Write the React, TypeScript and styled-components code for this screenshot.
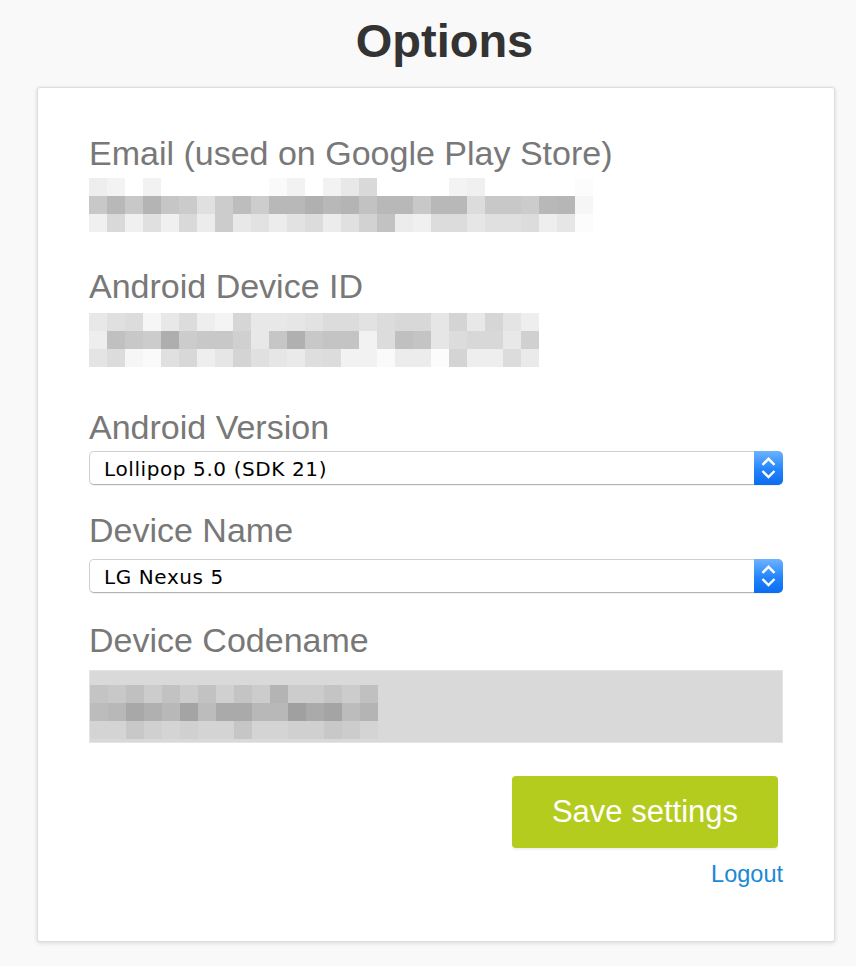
import React from "react";
import styled, { createGlobalStyle } from "styled-components";

const GlobalStyle = createGlobalStyle`
  html, body {
    margin: 0;
    padding: 0;
    background: #f9f9f9;
  }
  body {
    font-family: "Liberation Sans", Arial, sans-serif;
  }
  * { box-sizing: border-box; }
`;

const Page = styled.div`
  padding: 17px 0 20px 37px;
`;

const Title = styled.h1`
  margin: 0 0 23px 0;
  width: 798px;
  padding-left: 17px;
  text-align: center;
  font-family: "Liberation Sans", Arial, sans-serif;
  font-weight: bold;
  font-size: 47px;
  line-height: 47px;
  color: #333333;
`;

const Card = styled.div`
  width: 798px;
  background: #ffffff;
  border: 1px solid #dedede;
  border-radius: 3px;
  box-shadow: 0 1px 4px rgba(0, 0, 0, 0.14);
  padding: 45px 51px 53px 51px;
  display: flex;
  flex-direction: column;
`;

const Label = styled.div<{ $top: number }>`
  margin-top: ${(p) => p.$top}px;
  font-family: "Liberation Sans", Arial, sans-serif;
  font-size: 34px;
  line-height: 40px;
  color: #787878;
  white-space: nowrap;
`;

const Control = styled.div<{ $gap: number }>`
  margin-top: ${(p) => p.$gap}px;
  display: flex;
`;

const SelectBox = styled.div`
  position: relative;
  width: 100%;
  height: 34px;
  display: flex;
  align-items: flex-start;
  background: #ffffff;
  border: 1px solid #d0d0d0;
  border-bottom-color: #b3b3b3;
  border-radius: 5px;
  box-shadow: 0 1px 1px rgba(0, 0, 0, 0.06);
`;

const SelectText = styled.span`
  flex: 1;
  padding: 7px 0 0 14px;
  font-family: "DejaVu Sans", "Liberation Sans", sans-serif;
  font-size: 20px;
  line-height: 20px;
  letter-spacing: 0.6px;
  color: #000000;
`;

const Stepper = styled.span`
  width: 29px;
  height: 34px;
  margin: -1px -1px 0 0;
  border-radius: 0 5px 5px 0;
  background: linear-gradient(#6cb3ff, #2384fb 55%, #0a6cf0);
  display: flex;
`;

const Disabled = styled.div`
  width: 100%;
  height: 73px;
  background: #d9d9d9;
  border: 1px solid #e4e4e4;
  padding-top: 14px;
  display: flex;
`;

const Actions = styled.div`
  margin-top: 33px;
  display: flex;
  flex-direction: column;
  align-items: flex-end;
`;

const SaveButton = styled.button`
  width: 266px;
  height: 72px;
  margin-right: 5px;
  border: none;
  border-radius: 4px;
  background: #b4cc1e;
  box-shadow: 0 2px 2px rgba(0, 0, 0, 0.06);
  color: #ffffff;
  font-family: "Liberation Sans", Arial, sans-serif;
  font-size: 31px;
  line-height: 72px;
  padding: 0;
  cursor: pointer;
`;

const LogoutLink = styled.a`
  margin-top: 12px;
  font-family: "Liberation Sans", Arial, sans-serif;
  font-size: 23.5px;
  line-height: 28px;
  color: #1a88d3;
  text-decoration: none;
`;

const hex = (v: number) => {
  const h = v.toString(16).padStart(2, "0");
  return `#${h}${h}${h}`;
};

const Pixelated: React.FC<{ rows: number[][] }> = ({ rows }) => {
  const cell = 18;
  const cols = rows[0].length;
  return (
    <svg width={cols * cell} height={rows.length * cell} style={{ display: "block" }}>
      {rows.map((r, y) =>
        r.map((v, x) => (
          <rect key={`${x}-${y}`} x={x * cell} y={y * cell} width={cell} height={cell} fill={hex(v)} />
        ))
      )}
    </svg>
  );
};

const emailRows = [
  [0xee, 0xf3, 0xff, 0xf2, 0xff, 0xff, 0xff, 0xff, 0xff, 0xff, 0xfa, 0xf2, 0xff, 0xf2, 0xe8, 0xd9, 0xff, 0xff, 0xff, 0xff, 0xf3, 0xf0, 0xff, 0xff, 0xff, 0xff, 0xff, 0xfc],
  [0xc8, 0xb8, 0xc8, 0xb4, 0xc6, 0xcb, 0xe0, 0xcc, 0xbd, 0xcd, 0xb8, 0xb8, 0xb0, 0xb8, 0xb4, 0xc2, 0xb8, 0xb8, 0xc8, 0xb8, 0xb8, 0xdc, 0xc8, 0xc8, 0xcc, 0xb8, 0xb6, 0xf6],
  [0xf0, 0xd9, 0xf0, 0xe0, 0xf0, 0xd9, 0xec, 0xcc, 0xe8, 0xe2, 0xec, 0xe2, 0xdc, 0xec, 0xe0, 0xd2, 0xc2, 0xec, 0xf0, 0xdc, 0xdc, 0xe6, 0xe0, 0xe0, 0xdc, 0xee, 0xe6, 0xfc],
];

const deviceRows = [
  [0xe8, 0xe0, 0xdc, 0xf6, 0xe8, 0xdc, 0xee, 0xf4, 0xd6, 0xe8, 0xe8, 0xe6, 0xe2, 0xdc, 0xdc, 0xe2, 0xdc, 0xd8, 0xd8, 0xe6, 0xd4, 0xe8, 0xd6, 0xe4, 0xee],
  [0xee, 0xc0, 0xc8, 0xcc, 0xae, 0xcc, 0xc8, 0xc8, 0xd0, 0xe8, 0xc6, 0xb0, 0xc8, 0xc4, 0xc4, 0xf2, 0xdc, 0xc0, 0xc4, 0xe6, 0xdc, 0xd8, 0xd8, 0xe8, 0xd0],
  [0xe4, 0xdc, 0xf6, 0xfa, 0xe0, 0xd8, 0xee, 0xe6, 0xd4, 0xe0, 0xe6, 0xea, 0xde, 0xdc, 0xf2, 0xf2, 0xfa, 0xec, 0xec, 0xfc, 0xd4, 0xee, 0xee, 0xdc, 0xea],
];

const codenameRows = [
  [0xc4, 0xc8, 0xc0, 0xcc, 0xc2, 0xcc, 0xc2, 0xd0, 0xc4, 0xcc, 0xb4, 0xcc, 0xcc, 0xc4, 0xcc, 0xc0],
  [0xbc, 0xb8, 0xa8, 0xb0, 0xb8, 0xa4, 0xbc, 0xaa, 0xaa, 0xb8, 0xb8, 0xa0, 0xaa, 0xa4, 0xbc, 0xb4],
  [0xd4, 0xd4, 0xc8, 0xd0, 0xd4, 0xd0, 0xd4, 0xd4, 0xc6, 0xd4, 0xd4, 0xd0, 0xd0, 0xc8, 0xcc, 0xd4],
];

const StepperIcon = () => (
  <svg width="29" height="34" viewBox="0 0 29 34">
    <path d="M8.5 13.8 L14.5 7.8 L20.5 13.8" fill="none" stroke="#ffffff" strokeWidth="2.4" />
    <path d="M8.5 20 L14.5 26 L20.5 20" fill="none" stroke="#ffffff" strokeWidth="2.4" />
  </svg>
);

const Select: React.FC<{ value: string }> = ({ value }) => (
  <SelectBox>
    <SelectText>{value}</SelectText>
    <Stepper>
      <StepperIcon />
    </Stepper>
  </SelectBox>
);

export default function App() {
  return (
    <>
      <GlobalStyle />
      <Page>
        <Title>Options</Title>
        <Card>
          <Label $top={0}>Email (used on Google Play Store)</Label>
          <Control $gap={5}>
            <Pixelated rows={emailRows} />
          </Control>

          <Label $top={34}>Android Device ID</Label>
          <Control $gap={7}>
            <Pixelated rows={deviceRows} />
          </Control>

          <Label $top={40}>Android Version</Label>
          <Control $gap={4}>
            <Select value="Lollipop 5.0 (SDK 21)" />
          </Control>

          <Label $top={25}>Device Name</Label>
          <Control $gap={9}>
            <Select value="LG Nexus 5" />
          </Control>

          <Label $top={27}>Device Codename</Label>
          <Control $gap={10}>
            <Disabled>
              <Pixelated rows={codenameRows} />
            </Disabled>
          </Control>

          <Actions>
            <SaveButton type="button">Save settings</SaveButton>
            <LogoutLink href="#">Logout</LogoutLink>
          </Actions>
        </Card>
      </Page>
    </>
  );
}
